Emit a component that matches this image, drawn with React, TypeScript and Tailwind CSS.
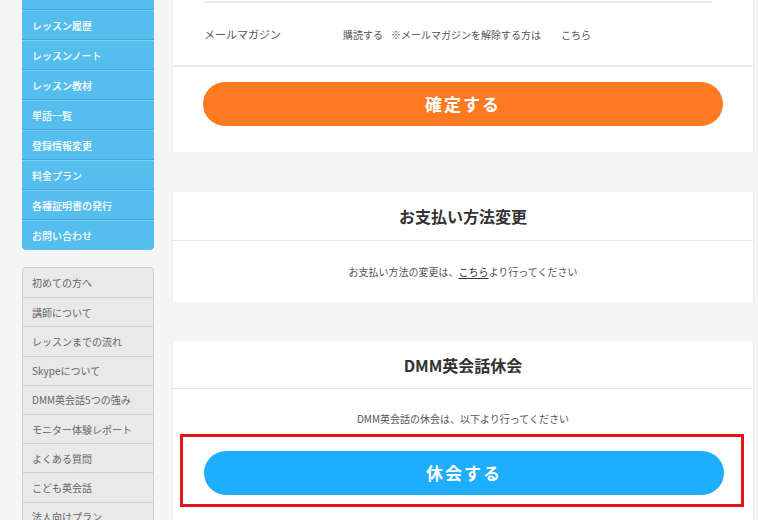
const blueMenu = [
  "レッスン履歴",
  "レッスンノート",
  "レッスン教材",
  "単語一覧",
  "登録情報変更",
  "料金プラン",
  "各種証明書の発行",
  "お問い合わせ",
];

const grayMenu = [
  "初めての方へ",
  "講師について",
  "レッスンまでの流れ",
  "Skypeについて",
  "DMM英会話5つの強み",
  "モニター体験レポート",
  "よくある質問",
  "こども英会話",
  "法人向けプラン",
];

const App = () => {
  return (
    <div
      className="w-[758px] h-[520px] overflow-hidden bg-[#f5f5f5] flex"
      style={{ fontFamily: '"Noto Sans CJK JP", "Noto Sans", sans-serif' }}
    >
      {/* Sidebar */}
      <div className="ml-[22px] w-[132px] shrink-0 flex flex-col">
        <div className="shrink-0 bg-[#56beee] rounded-b-[4px] overflow-hidden">
          <div className="h-[10px] border-b border-[#3fa5e2]" />
          {blueMenu.map((item, i) => (
            <div
              key={item}
              className={`h-[30px] flex items-center pl-[10px] text-[10px] font-medium text-white border-t border-[#80cff3] ${
                i < blueMenu.length - 1 ? "border-b border-b-[#3fa5e2]" : ""
              }`}
            >
              {item}
            </div>
          ))}
        </div>

        <div className="shrink-0 mt-[17px] bg-[#e9e9e9] border border-[#cfcfcf] rounded-t-[4px]">
          {grayMenu.map((item, i) => (
            <div
              key={item}
              className={`h-[29.2px] flex items-center pl-[9px] text-[10px] text-[#666666] ${
                i > 0 ? "border-t border-[#cfcfcf]" : ""
              }`}
            >
              {item}
            </div>
          ))}
        </div>
      </div>

      {/* Main */}
      <div className="ml-[18px] w-[582px] shrink-0 flex flex-col">
        {/* Mail magazine panel */}
        <div className="shrink-0 bg-white border-x border-[#ececec]">
          <div className="pt-px px-[31px]">
            <div className="w-[508px] border-t-2 border-[#ececec] h-[64px] flex items-center text-[#555555]">
              <div className="w-[139px] text-[11px]">メールマガジン</div>
              <div className="text-[10px] flex items-center">
                <span>購読する</span>
                <span className="ml-[8px]">※メールマガジンを解除する方は</span>
                <span className="ml-[20px]">こちら</span>
              </div>
            </div>
          </div>
          <div className="border-t-2 border-[#ececec] pt-[15px] pb-[26px] flex justify-center">
            <button className="w-[520px] h-[44px] rounded-full bg-[#fe7a22] text-white text-[17px] font-bold tracking-[0.12em]">
              確定する
            </button>
          </div>
        </div>

        {/* Payment panel */}
        <div className="shrink-0 mt-[40px] bg-white border-x border-[#ececec]">
          <div className="h-[48px] flex items-center justify-center text-[16px] font-bold text-[#333333]">
            お支払い方法変更
          </div>
          <div className="border-t border-[#e8e8e8] h-[62px] flex items-center justify-center text-[10px] text-[#555555]">
            お支払い方法の変更は、
            <span className="underline underline-offset-2 text-[#333333]">こちら</span>
            より行ってください
          </div>
        </div>

        {/* Suspend panel */}
        <div className="shrink-0 mt-[40px] bg-white border-x border-[#ececec] grow">
          <div className="h-[46px] flex items-center justify-center text-[16px] font-bold text-[#333333]">
            DMM英会話休会
          </div>
          <div className="border-t border-[#e8e8e8]">
            <div className="pt-[23px] text-center text-[10px] leading-[14px] text-[#555555]">
              DMM英会話の休会は、以下より行ってください
            </div>
            <div className="mt-[8px] ml-[7px] w-[564px] h-[73px] border-[3px] border-[#e5141c] pt-[14px] pl-[21px]">
              <button className="w-[520px] h-[44px] rounded-full bg-[#1eaefd] text-white text-[17px] font-bold tracking-[0.12em]">
                休会する
              </button>
            </div>
          </div>
        </div>
      </div>
    </div>
  );
};

export default App;
